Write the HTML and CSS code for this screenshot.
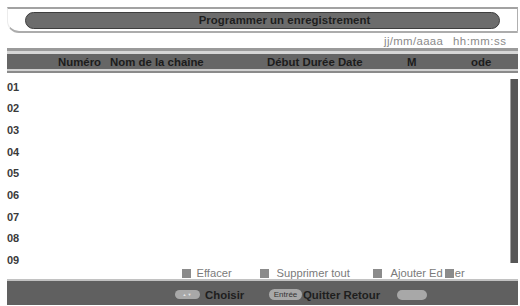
FILE: index.html
```html
<!DOCTYPE html>
<html lang="fr">
<head>
<meta charset="utf-8">
<title>Programmer un enregistrement</title>
<link rel="stylesheet" href="styles.css">
</head>
<body>
<div class="screen">
  <div class="titlebar">
    <div class="pill-title">Programmer un enregistrement</div>
  </div>
  <div class="datefmt">
    <span class="d1">jj/mm/aaaa</span>
    <span class="d2">hh:mm:ss</span>
  </div>
  <div class="colhead">
    <span class="c-num">Numéro</span>
    <span class="c-name">Nom de la chaîne</span>
    <span class="c-time">Début Durée Date</span>
    <span class="c-m">M</span>
    <span class="c-ode">ode</span>
  </div>
  <div class="listarea">
    <ol class="rows">
      <li>01</li><li>02</li><li>03</li><li>04</li><li>05</li><li>06</li><li>07</li><li>08</li><li>09</li>
    </ol>
    <div class="scrollbar"></div>
  </div>
  <div class="legend">
    <span class="lg lg1"><i class="sq"></i>Effacer</span>
    <span class="lg lg2"><i class="sq"></i>Supprimer tout</span>
    <span class="lg lg3"><i class="sq"></i>Ajouter Ed<span class="hid">it</span>er</span>
  </div>
  <div class="footer">
    <span class="key k1">▲▼</span>
    <span class="lbl choisir">Choisir</span>
    <span class="key k2">Entrée</span>
    <span class="lbl quitter">Quitter Retour</span>
    <span class="key k3"></span>
  </div>
</div>
</body>
</html>
```
FILE: styles.css
```css
html, body {
  margin: 0;
  padding: 0;
  background: #ffffff;
}
.screen {
  width: 520px;
  height: 306px;
  overflow: hidden;
  background: #ffffff;
  font-family: "Liberation Sans", Arial, sans-serif;
  font-size: 11.4px;
}
.titlebar {
  box-sizing: border-box;
  margin: 7px 0 0 7px;
  width: 511px;
  height: 26px;
  border-top: 2px solid #a2a2a2;
  border-right: 1px solid #b0b0b0;
  border-bottom: 2.5px solid #acacac;
  border-left: 1px solid #ececec;
  border-bottom-left-radius: 12px;
  padding: 2.5px 0 0 17px;
}
.pill-title {
  box-sizing: border-box;
  width: 475px;
  height: 17px;
  border: 1px solid #3e3e3e;
  border-radius: 9px;
  background: #6c6c6c;
  color: #1e1e1e;
  font-weight: bold;
  text-align: center;
  line-height: 15px;
  padding-left: 44px;
  letter-spacing: 0.05px;
}
.datefmt {
  display: flex;
  height: 14px;
  margin-top: 1px;
  line-height: 14px;
  color: #8a8a8a;
  padding-left: 384px;
}
.d1 {
  width: 69px;
  letter-spacing: 0.35px;
}
.d2 {
  letter-spacing: 0.5px;
}
.colhead {
  box-sizing: border-box;
  display: flex;
  align-items: center;
  margin-left: 7px;
  width: 511px;
  height: 25px;
  border-top: 3px solid #9a9a9a;
  border-bottom: 2px solid #8a8a8a;
  background: #666666;
  box-shadow: inset 0 3px 0 #d6d6d6, inset 0 -2px 0 #d0d0d0;
  padding: 1px 0 0 51px;
  color: #1c1c1c;
  font-weight: bold;
}
.c-num { width: 52px; }
.c-name { width: 157px; }
.c-time { width: 140px; }
.c-m { width: 64px; }
.c-ode { width: 40px; }
.listarea {
  display: flex;
  height: 195px;
}
.rows {
  flex: 1;
  list-style: none;
  margin: 0;
  padding: 7.5px 0 0 7px;
  display: flex;
  flex-direction: column;
  gap: 8.7px;
}
.rows li {
  height: 13px;
  line-height: 13px;
  color: #3a3a3a;
  font-weight: bold;
  font-size: 11px;
}
.scrollbar {
  align-self: flex-start;
  box-sizing: border-box;
  width: 8px;
  height: 184px;
  margin: 6px 2px 0 0;
  background: #575757;
  border-left: 1px solid #a0a0a0;
}
.legend {
  display: flex;
  height: 11px;
  line-height: 11px;
  padding-left: 182px;
  color: #7a7a7a;
  font-size: 11.2px;
}
.lg {
  display: flex;
  align-items: center;
  white-space: nowrap;
}
.lg1 { width: 78px; }
.lg2 { width: 113px; }
.sq {
  display: inline-block;
  width: 8.5px;
  height: 8.5px;
  background: #8b8b8b;
  margin-right: 6px;
}
.lg2 .sq { margin-right: 8px; }
.lg3 .sq { margin-right: 9px; }
.hid {
  display: inline-block;
  position: relative;
  width: 12px;
  text-align: center;
}
.hid::after {
  content: "";
  position: absolute;
  left: 2px;
  top: 1px;
  width: 9px;
  height: 9px;
  background: #8b8b8b;
}
.footer {
  box-sizing: border-box;
  display: flex;
  align-items: center;
  margin-left: 7px;
  width: 511px;
  height: 26px;
  border-top: 2px solid #c2c2c2;
  background: #606060;
  padding: 3px 0 0 168px;
  color: #1e1e1e;
  font-weight: bold;
}
.key {
  display: inline-flex;
  align-items: center;
  justify-content: center;
  background: #a8a8a8;
  border-radius: 6px;
  white-space: nowrap;
}
.k1 {
  width: 25px;
  height: 9px;
  color: #e6e6e6;
  font-size: 4px;
  letter-spacing: 1px;
}
.choisir {
  width: 69px;
  padding-left: 5px;
  box-sizing: border-box;
}
.k2 {
  width: 33px;
  height: 11px;
  color: #333333;
  font-weight: normal;
  font-size: 8px;
  overflow: hidden;
}
.quitter {
  width: 95px;
  white-space: nowrap;
  padding-left: 1px;
  box-sizing: border-box;
}
.k3 {
  width: 30px;
  height: 10px;
  border-radius: 5px;
}
```
